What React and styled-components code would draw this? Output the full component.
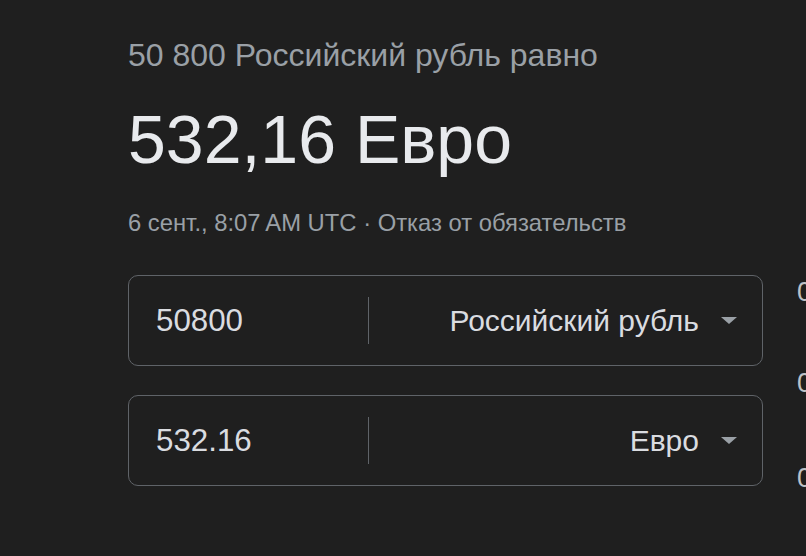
import React from 'react';
import styled, { createGlobalStyle } from 'styled-components';

const GlobalStyle = createGlobalStyle`
  html, body {
    margin: 0;
    background: #1f1f1f;
    overflow: hidden;
  }
  body {
    font-family: "Liberation Sans", Arial, sans-serif;
  }
`;

const Page = styled.div`
  display: flex;
  gap: 34px;
  padding: 35px 0 0 128px;
  width: 806px;
  height: 556px;
  box-sizing: border-box;
  white-space: nowrap;
`;

const Main = styled.div`
  display: flex;
  flex-direction: column;
  width: 635px;
  flex-shrink: 0;
`;

const Subtitle = styled.div`
  color: #9aa0a6;
  font-size: 32px;
  line-height: 40px;
`;

const Result = styled.div`
  color: #e8eaed;
  font-size: 68px;
  line-height: 80px;
  margin-top: 24px;
`;

const Meta = styled.div`
  color: #9aa0a6;
  font-size: 23.8px;
  line-height: 28px;
  margin-top: 30px;
`;

const Fields = styled.div`
  display: flex;
  flex-direction: column;
  gap: 29px;
  margin-top: 38px;
`;

const Field = styled.div`
  display: flex;
  align-items: center;
  height: 91px;
  border: 1px solid #5f6368;
  border-radius: 10px;
  box-sizing: border-box;
`;

const Amount = styled.div`
  width: 239px;
  padding-left: 27px;
  box-sizing: border-box;
  color: #dadce0;
  font-size: 31.3px;
`;

const Divider = styled.div`
  width: 1px;
  height: 47px;
  background: #5f6368;
`;

const Select = styled.div`
  flex: 1;
  display: flex;
  align-items: center;
  justify-content: flex-end;
  gap: 22px;
  padding-right: 25px;
  color: #dadce0;
  font-size: 30px;
`;

const Arrow = styled.span`
  width: 0;
  height: 0;
  border-left: 8px solid transparent;
  border-right: 8px solid transparent;
  border-top: 7px solid #9aa0a6;
`;

const Side = styled.div`
  display: flex;
  flex-direction: column;
  padding-top: 243px;
  gap: 63px;
`;

const SideValue = styled.div`
  color: #bdc1c6;
  font-size: 27px;
  line-height: 28px;
  margin-top: ${(p) => p.$offset || 0}px;
`;

const fields = [
  { amount: '50800', currency: 'Российский рубль' },
  { amount: '532.16', currency: 'Евро' },
];

export default function App() {
  return (
    <>
      <GlobalStyle />
      <Page>
        <Main>
          <Subtitle>50 800 Российский рубль равно</Subtitle>
          <Result>532,16 Евро</Result>
          <Meta>6 сент., 8:07{'\u202F'}AM UTC · Отказ от обязательств</Meta>
          <Fields>
            {fields.map((f) => (
              <Field key={f.amount}>
                <Amount>{f.amount}</Amount>
                <Divider />
                <Select>
                  {f.currency}
                  <Arrow />
                </Select>
              </Field>
            ))}
          </Fields>
        </Main>
        <Side>
          <SideValue>0</SideValue>
          <SideValue>0</SideValue>
          <SideValue $offset={4}>0</SideValue>
        </Side>
      </Page>
    </>
  );
}
